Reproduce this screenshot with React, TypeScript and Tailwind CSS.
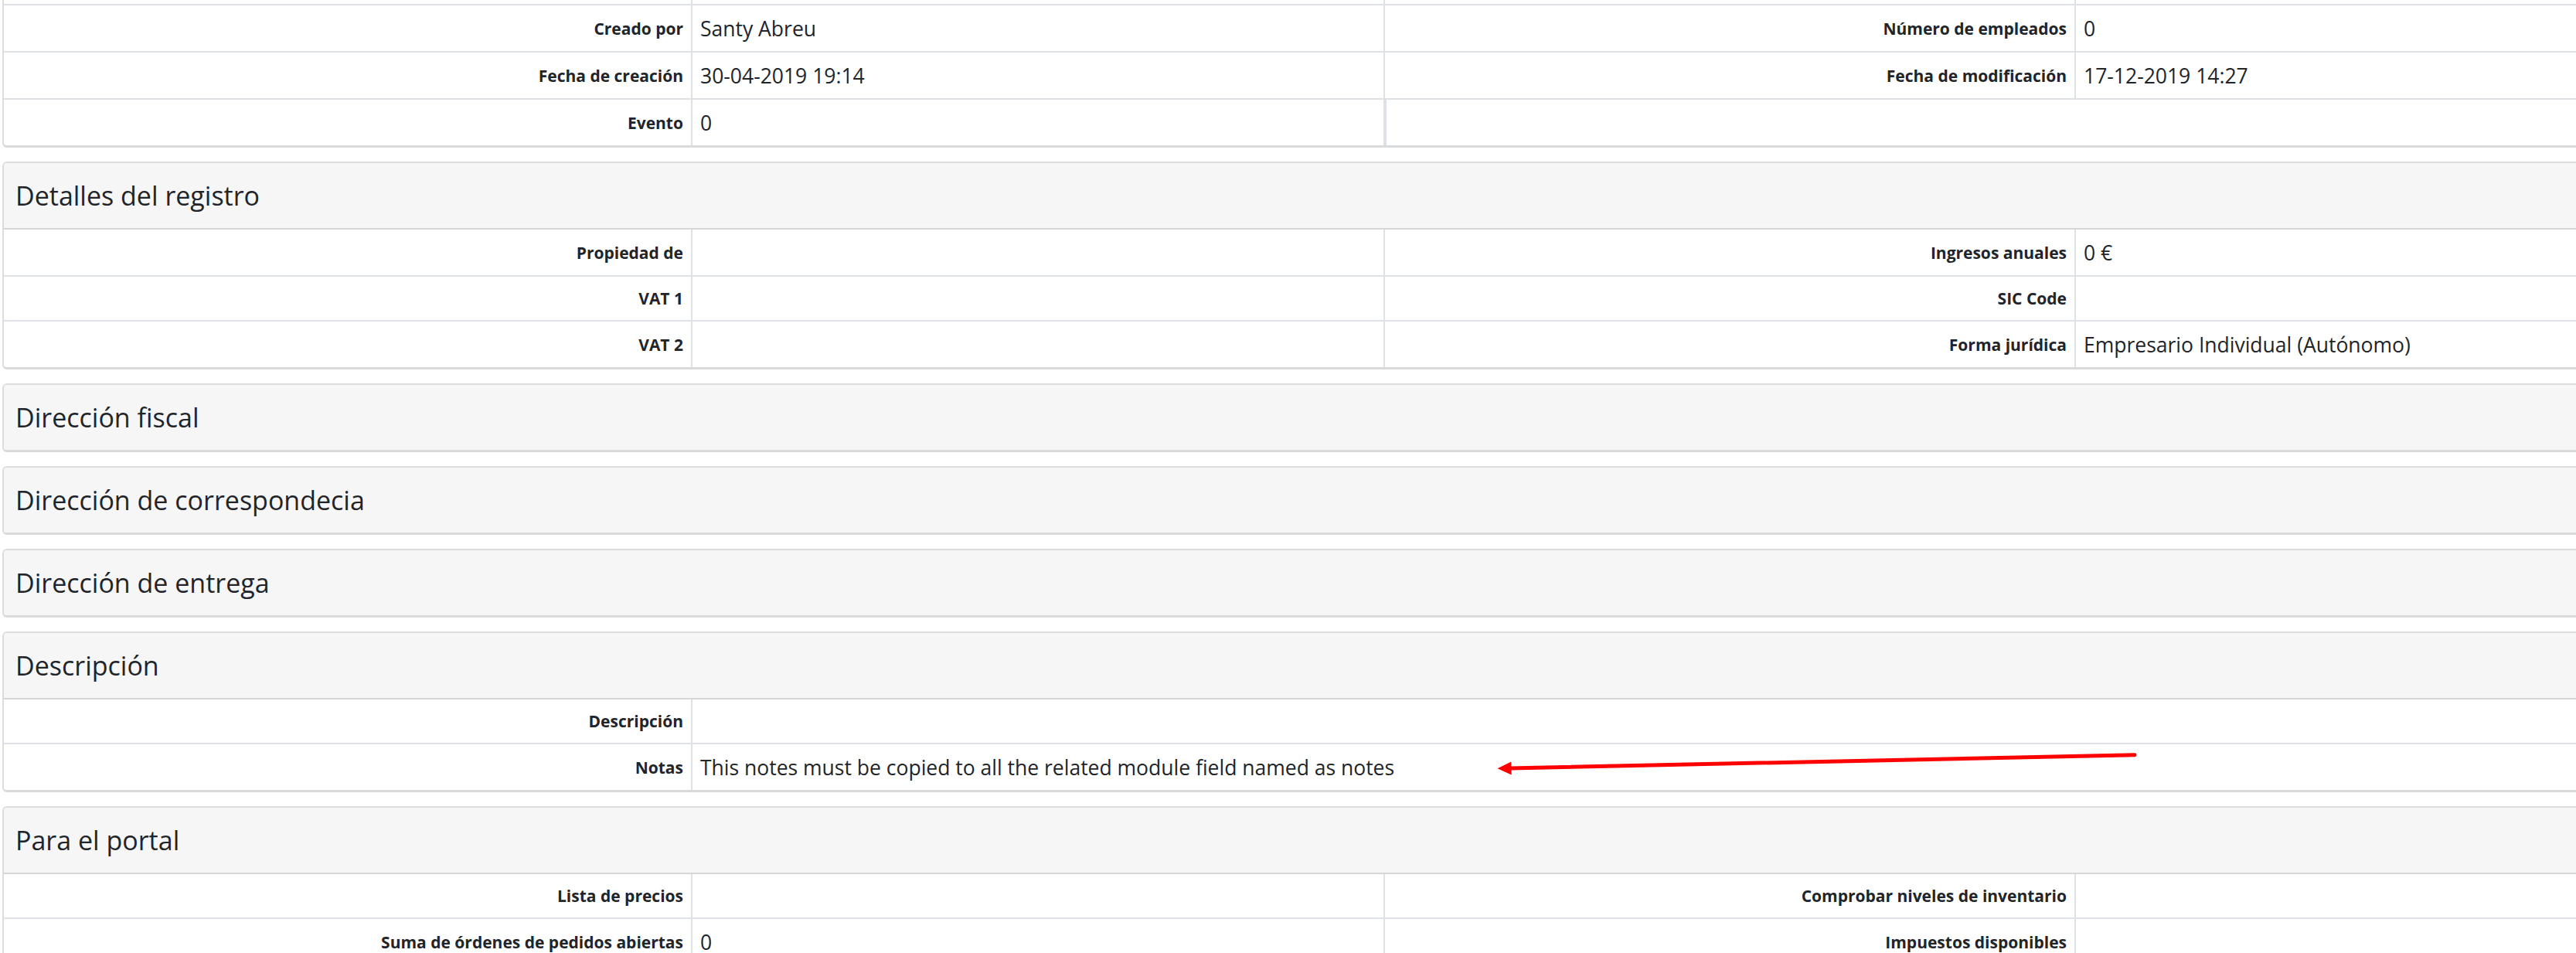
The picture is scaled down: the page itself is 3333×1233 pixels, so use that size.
import React from "react";

type Row =
  | { kind: "quad"; cells: [string, string, string, string] }
  | { kind: "half"; cells: [string, string] }
  | { kind: "wide"; cells: [string, string] }
  | { kind: "strip" };

type Block = {
  title?: string;
  cut?: boolean;
  rows: Row[];
};

const blocks: Block[] = [
  {
    cut: true,
    rows: [
      { kind: "strip" },
      { kind: "quad", cells: ["Creado por", "Santy Abreu", "Número de empleados", "0"] },
      {
        kind: "quad",
        cells: ["Fecha de creación", "30-04-2019 19:14", "Fecha de modificación", "17-12-2019 14:27"],
      },
      { kind: "half", cells: ["Evento", "0"] },
    ],
  },
  {
    title: "Detalles del registro",
    rows: [
      { kind: "quad", cells: ["Propiedad de", "", "Ingresos anuales", "0 €"] },
      { kind: "quad", cells: ["VAT 1", "", "SIC Code", ""] },
      { kind: "quad", cells: ["VAT 2", "", "Forma jurídica", "Empresario Individual (Autónomo)"] },
    ],
  },
  { title: "Dirección fiscal", rows: [] },
  { title: "Dirección de correspondecia", rows: [] },
  { title: "Dirección de entrega", rows: [] },
  {
    title: "Descripción",
    rows: [
      { kind: "wide", cells: ["Descripción", ""] },
      {
        kind: "wide",
        cells: ["Notas", "This notes must be copied to all the related module field named as notes"],
      },
    ],
  },
  {
    title: "Para el portal",
    rows: [
      { kind: "quad", cells: ["Lista de precios", "", "Comprobar niveles de inventario", ""] },
      { kind: "quad", cells: ["Suma de órdenes de pedidos abiertas", "0", "Impuestos disponibles", ""] },
    ],
  },
];

const Label = ({ text, last }: { text: string; last?: boolean }) => (
  <div
    className={`flex items-center justify-end px-[10px] text-right text-[21px] font-bold leading-[32px] text-[#212529] ${
      last ? "" : "border-r-2 border-[#dee2e6]"
    }`}
  >
    {text}
  </div>
);

const Value = ({ text, className = "" }: { text: string; className?: string }) => (
  <div
    className={`flex items-center whitespace-nowrap px-[10px] text-[26.5px] leading-[36px] text-[#212529] ${className}`}
  >
    {text}
  </div>
);

const FieldRow = ({ row, last }: { row: Row; last: boolean }) => {
  const line = last ? "" : "border-b-2 border-[#dee2e6]";

  if (row.kind === "strip") {
    return (
      <div className={`grid h-[7px] grid-cols-[891px_896px_894px_1fr] ${line}`}>
        <div className="border-r-2 border-[#dee2e6]" />
        <div className="border-r-2 border-[#dee2e6]" />
        <div className="border-r-2 border-[#dee2e6]" />
        <div />
      </div>
    );
  }

  // rows holding a value are a little taller than label-only rows
  const tall = row.cells.some((c, i) => i % 2 === 1 && c !== "");
  const height = tall ? (last ? "h-[59px]" : "h-[61px]") : last ? "h-[56px]" : "h-[58px]";

  if (row.kind === "wide") {
    return (
      <div className={`grid grid-cols-[891px_1fr] ${height} ${line}`}>
        <Label text={row.cells[0]} />
        <Value text={row.cells[1]} />
      </div>
    );
  }

  if (row.kind === "half") {
    return (
      <div className={`grid grid-cols-[891px_896px_1fr] ${height} ${line}`}>
        <Label text={row.cells[0]} />
        <Value text={row.cells[1]} className="border-r-2 border-[#dee2e6]" />
        <div className="border-l-2 border-[#dee2e6]" />
      </div>
    );
  }

  return (
    <div className={`grid grid-cols-[891px_896px_894px_1fr] ${height} ${line}`}>
      <Label text={row.cells[0]} />
      <Value text={row.cells[1]} className="border-r-2 border-[#dee2e6]" />
      <Label text={row.cells[2]} />
      <Value text={row.cells[3]} />
    </div>
  );
};

const Card = ({ block }: { block: Block }) => (
  <div
    className={`w-[3590px] overflow-hidden border-2 border-b-[3px] border-[#dcdcdc] border-b-[#d9dadc] bg-white ${
      block.cut ? "rounded-b-[6px] border-t-0" : "rounded-[6px]"
    }`}
  >
    {block.title && (
      <div
        className={`flex items-center bg-[#f6f6f6] pl-[15px] text-[34px] text-[#212529] ${
          block.rows.length ? "h-[86px] border-b-2 border-[#d6d6d6]" : "h-[84px]"
        }`}
      >
        {block.title}
      </div>
    )}
    {block.rows.map((row, i) => (
      <FieldRow key={i} row={row} last={i === block.rows.length - 1} />
    ))}
  </div>
);

export default function App() {
  return (
    <div
      className="relative h-[1233px] w-[3333px] overflow-hidden bg-white"
      style={{ fontFamily: '"Open Sans", "Noto Sans", sans-serif' }}
    >
      <div className="flex flex-col gap-[18px] pl-[3px]">
        {blocks.map((b, i) => (
          <Card key={i} block={b} />
        ))}
      </div>

      <svg
        className="pointer-events-none absolute left-[1930px] top-[965px]"
        width="840"
        height="40"
        viewBox="0 0 840 40"
      >
        <line x1="832" y1="11.7" x2="24" y2="29" stroke="#ff0000" strokeWidth="5" strokeLinecap="round" />
        <polygon points="7.5,29.3 25.3,20.5 25.7,37.5" fill="#ff0000" />
      </svg>
    </div>
  );
}
